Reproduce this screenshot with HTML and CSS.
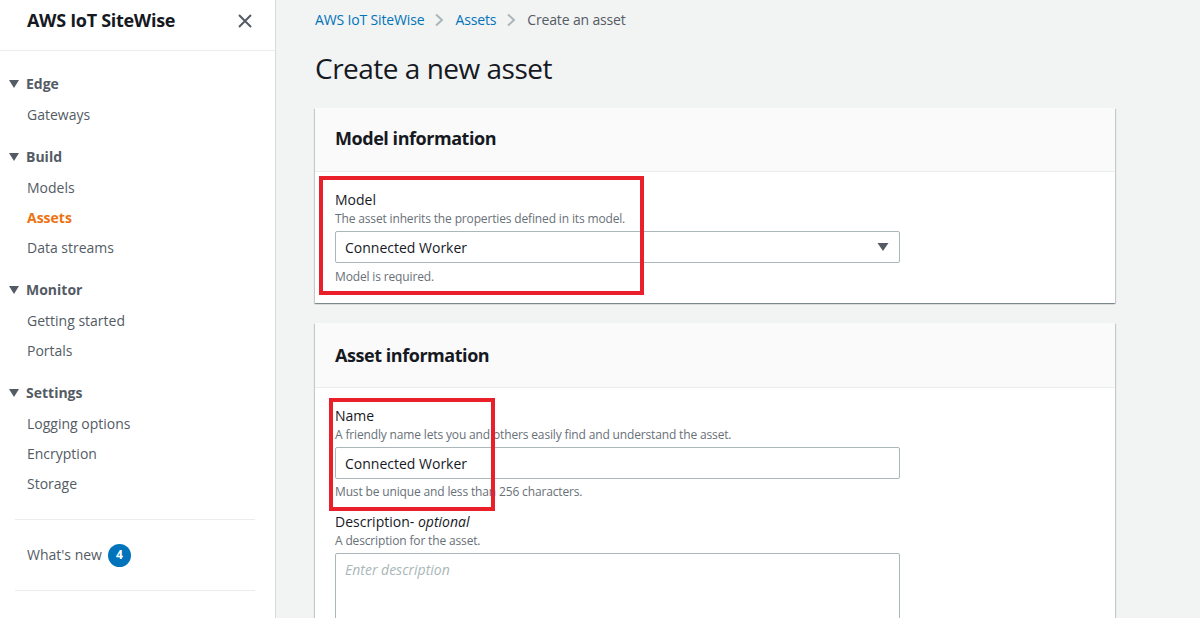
FILE: index.html
```html
<!DOCTYPE html>
<html lang="en">
<head>
<meta charset="utf-8">
<title>Create a new asset</title>
<link rel="stylesheet" href="styles.css">
</head>
<body>
<div class="app">
  <aside class="nav">
    <div class="nav-header">
      <span class="nav-title">AWS IoT SiteWise</span>
      <button class="nav-close" aria-label="Close">
        <svg width="16" height="16" viewBox="0 0 16 16"><path d="M2 2 L14 14 M14 2 L2 14" stroke="#545b64" stroke-width="2" fill="none"/></svg>
      </button>
    </div>
    <div class="nav-body">
      <section class="group">
        <div class="group-title"><svg class="caret" width="12" height="10" viewBox="0 0 12 10"><path d="M1 1 H11 L6 9 Z" fill="#545b64"/></svg>Edge</div>
        <ul class="group-list"><li>Gateways</li></ul>
      </section>
      <section class="group">
        <div class="group-title"><svg class="caret" width="12" height="10" viewBox="0 0 12 10"><path d="M1 1 H11 L6 9 Z" fill="#545b64"/></svg>Build</div>
        <ul class="group-list"><li>Models</li><li class="active">Assets</li><li>Data streams</li></ul>
      </section>
      <section class="group">
        <div class="group-title"><svg class="caret" width="12" height="10" viewBox="0 0 12 10"><path d="M1 1 H11 L6 9 Z" fill="#545b64"/></svg>Monitor</div>
        <ul class="group-list"><li>Getting started</li><li>Portals</li></ul>
      </section>
      <section class="group">
        <div class="group-title"><svg class="caret" width="12" height="10" viewBox="0 0 12 10"><path d="M1 1 H11 L6 9 Z" fill="#545b64"/></svg>Settings</div>
        <ul class="group-list"><li>Logging options</li><li>Encryption</li><li>Storage</li></ul>
      </section>
    </div>
    <div class="nav-divider"></div>
    <div class="whats-new">What's new <span class="badge">4</span></div>
    <div class="nav-divider"></div>
  </aside>

  <main class="main">
    <nav class="breadcrumbs">
      <a class="crumb">AWS IoT SiteWise</a>
      <svg class="sep" width="10" height="14" viewBox="0 0 10 14"><path d="M2 1.5 L8 7 L2 12.5" stroke="#aab7b8" stroke-width="2" fill="none"/></svg>
      <a class="crumb">Assets</a>
      <svg class="sep" width="10" height="14" viewBox="0 0 10 14"><path d="M2 1.5 L8 7 L2 12.5" stroke="#aab7b8" stroke-width="2" fill="none"/></svg>
      <span class="crumb-current">Create an asset</span>
    </nav>
    <h1 class="page-title">Create a new asset</h1>

    <section class="panel">
      <div class="panel-header"><h2>Model information</h2></div>
      <div class="panel-body">
        <div class="field">
          <label class="field-label">Model</label>
          <div class="field-desc">The asset inherits the properties defined in its model.</div>
          <div class="select">
            <span>Connected Worker</span>
            <svg width="12" height="10" viewBox="0 0 12 10"><path d="M0.5 1 H11.5 L6 9 Z" fill="#545b64"/></svg>
          </div>
          <div class="field-hint">Model is required.</div>
        </div>
        <div class="highlight hl-model"></div>
      </div>
    </section>

    <section class="panel panel-asset">
      <div class="panel-header"><h2>Asset information</h2></div>
      <div class="panel-body">
        <div class="field">
          <label class="field-label">Name</label>
          <div class="field-desc">A friendly name lets you and others easily find and understand the asset.</div>
          <div class="input">Connected Worker</div>
          <div class="field-hint">Must be unique and less than 256 characters.</div>
        </div>
        <div class="field field-gap">
          <label class="field-label">Description- <i>optional</i></label>
          <div class="field-desc">A description for the asset.</div>
          <div class="textarea"><span class="placeholder">Enter description</span></div>
        </div>
        <div class="highlight hl-name"></div>
      </div>
    </section>
  </main>
</div>
</body>
</html>
```

FILE: styles.css
```css
* { box-sizing: border-box; }
html, body { margin: 0; padding: 0; height: 100%; overflow: hidden; }
body {
  font-family: "Open Sans", "Noto Sans", Arial, sans-serif;
  font-size: 14px;
  color: #16191f;
  background: #f2f3f3;
}
.app { display: flex; height: 618px; }

/* Navigation */
.nav {
  width: 276px;
  flex: none;
  background: #fff;
  border-right: 1px solid #d5dbdb;
  color: #545b64;
}
.nav-header {
  height: 51px;
  border-bottom: 1px solid #eaeded;
  display: flex;
  justify-content: space-between;
  align-items: flex-start;
  padding: 8px 22px 0 27px;
}
.nav-title { font-size: 18px; font-weight: 700; line-height: 24px; color: #16191f; letter-spacing: -0.3px; }
.nav-close {
  border: 0; background: none; padding: 0; margin-top: 5px;
  width: 16px; height: 16px; display: flex;
}
.nav-body { padding-top: 23px; }
.group + .group { margin-top: 17px; }
.group-title {
  display: flex; align-items: center;
  font-weight: 700; line-height: 20px; height: 20px;
  padding-left: 8px; color: #545b64;
}
.caret { margin-right: 6px; }
.group-list { list-style: none; margin: 6px 0 0; padding: 0 0 0 27px; }
.group-list li { line-height: 30px; height: 30px; }
.group-list li.active { color: #ec7211; font-weight: 700; }
.nav-divider { height: 1px; background: #eaeded; margin: 20px 20px 0 15px; }
.whats-new + .nav-divider { margin-top: 0; }
.whats-new {
  height: 70px; display: flex; align-items: center;
  padding-left: 27px; line-height: 20px;
}
.badge {
  width: 23px; height: 23px; border-radius: 50%;
  background: #0073bb; color: #fff;
  font-size: 12px; font-weight: 700;
  display: inline-flex; align-items: center; justify-content: center;
  margin-left: 6px;
}

/* Main */
.main { flex: 1; padding: 10px 0 0 39px; }
.breadcrumbs { display: flex; align-items: center; height: 20px; line-height: 20px; letter-spacing: -0.15px; }
.crumb { color: #0073bb; }
.crumb-current { color: #545b64; }
.sep { margin: 0 11px 0 10px; }
.page-title {
  margin: 20px 0 22px;
  font-size: 28px; font-weight: 400; line-height: 36px;
  letter-spacing: -0.5px;
  color: #16191f;
}
.panel {
  width: 800px;
  background: #fff;
  box-shadow: 0 1px 1px 0 rgba(0,28,36,.3), 1px 1px 1px 0 rgba(0,28,36,.15), -1px 1px 1px 0 rgba(0,28,36,.15);
  margin-bottom: 20px;
}
.panel-header {
  background: #fafafa;
  border-bottom: 1px solid #eaeded;
  padding: 18px 20px 21px;
}
.panel-asset .panel-header { padding: 20px 20px 20px; }
.panel-header h2 { margin: 0; font-size: 18px; line-height: 24px; font-weight: 700; color: #16191f; letter-spacing: -0.45px; }
.panel-body { position: relative; padding: 17px 20px 18px; }
.field-label { display: block; line-height: 22px; color: #16191f; }
.field-desc { font-size: 12px; line-height: 16px; color: #687078; letter-spacing: -0.15px; }
.field-hint { font-size: 12px; line-height: 16px; color: #687078; margin-top: 6px; letter-spacing: -0.15px; }
.panel-asset .field-hint { margin-top: 5px; }
.field-gap { margin-top: 11px; }
.select, .input, .textarea {
  width: 565px;
  border: 1px solid #aab7b8;
  border-radius: 2px;
  margin-top: 4px;
  background: #fff;
}
.select, .input {
  height: 32px;
  display: flex; align-items: center; justify-content: space-between;
  padding: 0 10px 0 9px;
}
.textarea { height: 110px; padding: 6px 9px; }
.placeholder { color: #aab7b8; font-style: italic; }

.highlight { position: absolute; border: 4px solid #e9202a; pointer-events: none; }
.hl-model { left: 4px; top: 4px; width: 325px; height: 119px; }
.hl-name { left: 14px; top: 10px; width: 166px; height: 113px; }
```
